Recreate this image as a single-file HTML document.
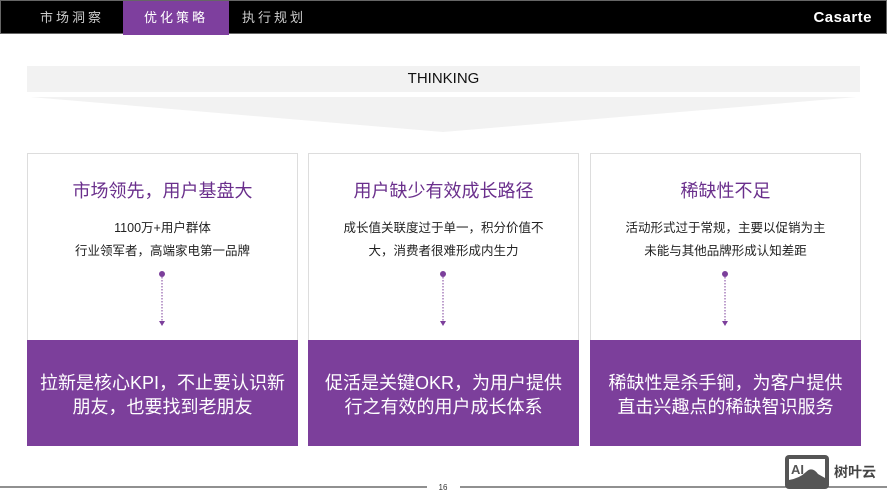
<!DOCTYPE html><html><head><meta charset="utf-8"><style>
*{margin:0;padding:0;box-sizing:border-box}
body{width:887px;height:500px;background:#fff;position:relative;overflow:hidden;font-family:"Liberation Sans","Noto Sans CJK SC",sans-serif}
.nav{position:absolute;left:0;top:0;width:887px;height:34px;background:#000;border:1px solid #666}
.tab{position:absolute;top:0;height:34px;line-height:33px;color:#ccc;font-size:13px;letter-spacing:3px;text-align:center}
.logo{position:absolute;right:14px;top:8px;color:#fff;font-weight:bold;font-size:15px;letter-spacing:0.5px}
.band{position:absolute;left:27px;top:66px;width:833px;height:26px;background:#f2f2f2;text-align:center;line-height:26px;font-size:15px;color:#111}
.card{position:absolute;top:153px;width:271px;height:293px;border:1px solid #ddd;background:#fff;text-align:center}
.card h3{margin-top:23px;font-weight:normal;font-size:18px;color:#6a2f8c}
.card p{margin-top:14px;font-size:12.5px;line-height:23px;color:#222}
.pur{position:absolute;left:-1px;right:-1px;bottom:-1px;height:106px;background:#7c3f9b;color:#fff;font-size:18px;line-height:24px;display:flex;align-items:center;justify-content:center;padding:4px 4px 0;white-space:nowrap}
</style></head><body>
<div class="nav">
<div class="tab" style="left:26px;width:90px">市场洞察</div>
<div class="tab" style="left:122px;width:106px;background:#7e3f9e;color:#fff">优化策略</div>
<div class="tab" style="left:228px;width:90px">执行规划</div>
<div class="logo">Casarte</div>
</div>
<div class="band">THINKING</div>
<svg style="position:absolute;left:0;top:95px" width="887" height="40"><polygon points="30,2 857,2 443,37" fill="#f2f2f2"/></svg>

<div class="card" style="left:27px"><h3>市场领先，用户基盘大</h3><p>1100万+用户群体<br>行业领军者，高端家电第一品牌</p>
<div class="pur">拉新是核心KPI，不止要认识新<br>朋友，也要找到老朋友</div></div>

<div class="card" style="left:308px"><h3>用户缺少有效成长路径</h3><p>成长值关联度过于单一，积分价值不<br>大，消费者很难形成内生力</p>
<div class="pur">促活是关键OKR，为用户提供<br>行之有效的用户成长体系</div></div>

<div class="card" style="left:590px"><h3>稀缺性不足</h3><p>活动形式过于常规，主要以促销为主<br>未能与其他品牌形成认知差距</p>
<div class="pur">稀缺性是杀手锏，为客户提供<br>直击兴趣点的稀缺智识服务</div></div>

<svg style="position:absolute;left:0;top:0" width="887" height="500">
<g fill="#7c3f9b" stroke="#7c3f9b">
<circle cx="162" cy="274" r="3" stroke="none"/><line x1="162" y1="277" x2="162" y2="321" stroke-dasharray="1.5 1.5"/><polygon points="159,321 165,321 162,326" stroke="none"/>
<circle cx="443" cy="274" r="3" stroke="none"/><line x1="443" y1="277" x2="443" y2="321" stroke-dasharray="1.5 1.5"/><polygon points="440,321 446,321 443,326" stroke="none"/>
<circle cx="725" cy="274" r="3" stroke="none"/><line x1="725" y1="277" x2="725" y2="321" stroke-dasharray="1.5 1.5"/><polygon points="722,321 728,321 725,326" stroke="none"/>
</g>
<line x1="0" y1="487" x2="427" y2="487" stroke="#222"/><line x1="460" y1="487" x2="887" y2="487" stroke="#222"/>
<text x="443" y="490" font-size="8" text-anchor="middle" fill="#333" font-family="Liberation Sans">16</text>
<rect x="785" y="455" width="44" height="34" rx="4" fill="#555"/>
<rect x="789" y="459" width="36" height="26" fill="#fff"/>
<text x="791" y="474" font-size="13" font-weight="bold" fill="#555" font-family="Liberation Sans">AI</text>
<path d="M789 485 L789 480 Q800 478 806 472 Q812 466 818 474 L825 478 L825 485Z" fill="#555"/>
<text x="834" y="477" font-size="14" font-weight="bold" fill="#444" font-family="Noto Sans CJK SC">树叶云</text>
</svg>
</body></html>
